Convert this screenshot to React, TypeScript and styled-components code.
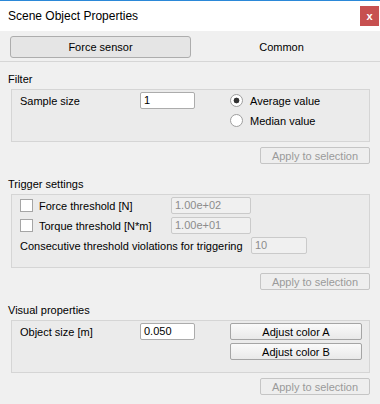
import React from 'react'
import styled, { createGlobalStyle } from 'styled-components'

const GlobalStyle = createGlobalStyle`
    html, body {
        margin: 0;
        padding: 0;
        background: #f0f0f0;
    }
    body {
        font-family: "Liberation Sans", Arial, sans-serif;
        font-size: 11px;
        color: #000;
    }
`

const Window = styled.div`
    width: 380px;
    height: 404px;
    background: #f0f0f0;
    border-top: 1px solid #2b88d8;
    box-sizing: border-box;
    display: flex;
    flex-direction: column;
`

const TitleBar = styled.div`
    height: 30px;
    background: #fff;
    display: flex;
    align-items: center;
    justify-content: space-between;
    padding-left: 8px;
`

const Caption = styled.span`
    font-size: 12px;
    color: #000;
`

const CloseButton = styled.div`
    width: 19px;
    height: 20px;
    margin-right: 1px;
    background: #c75050;
    color: #fff;
    font-weight: bold;
    font-size: 11px;
    display: flex;
    align-items: center;
    justify-content: center;
`

const TabBar = styled.div`
    display: grid;
    grid-template-columns: 181px 181px;
    gap: 0;
    padding: 5px 10px 3px 10px;
    border-bottom: 1px solid #d6d6d6;
`

const Tab = styled.div<{ active?: boolean }>`
    height: 22px;
    box-sizing: border-box;
    display: flex;
    align-items: center;
    justify-content: center;
    border: 1px solid ${({ active }) => (active ? '#adadad' : 'transparent')};
    border-radius: 3px;
    background: ${({ active }) => (active ? '#e5e5e5' : 'transparent')};
`

const Content = styled.div`
    padding: 11px 10px 0 8px;
    display: flex;
    flex-direction: column;
`

const Section = styled.div`
    display: flex;
    flex-direction: column;
    & + & {
        margin-top: 14px;
    }
`

const SectionTitle = styled.div`
    height: 13px;
    line-height: 13px;
    margin-bottom: 3px;
`

const GroupBox = styled.div<{ bottom: number }>`
    margin-left: 3px;
    border: 1px solid #d5d5d5;
    background: #ebebeb;
    padding: 2px 8px ${({ bottom }) => bottom}px 8px;
    display: grid;
    align-items: center;
`

const FilterGrid = styled(GroupBox)`
    grid-template-columns: 120px 55px 35px auto;
    grid-template-rows: 17px 17px;
    row-gap: 3px;
`

const TriggerGrid = styled(GroupBox)`
    grid-template-columns: 19px 132px 80px auto;
    grid-template-rows: 17px 17px 17px;
    row-gap: 3px;
`

const VisualGrid = styled(GroupBox)`
    grid-template-columns: 120px 55px 35px 132px;
    grid-template-rows: 17px 17px;
    row-gap: 3px;
`

const Label = styled.span<{ span?: number }>`
    grid-column: ${({ span }) => (span ? `span ${span}` : 'auto')};
    white-space: nowrap;
`

const Input = styled.div<{ disabled?: boolean; w?: number }>`
    width: ${({ w }) => (w ? `${w}px` : '100%')};
    height: 17px;
    box-sizing: border-box;
    border: 1px solid ${({ disabled }) => (disabled ? '#cacaca' : '#acacac')};
    border-radius: 2px;
    background: ${({ disabled }) => (disabled ? '#f0f0f0' : '#fff')};
    color: ${({ disabled }) => (disabled ? '#8c8c8c' : '#000')};
    padding-left: 3px;
    line-height: 15px;
`

const Gap = styled.span`
    grid-column: span 2;
`

const Radio = styled.label<{ checked?: boolean }>`
    display: flex;
    align-items: center;
    gap: 7px;
    &::before {
        content: '';
        width: 11px;
        height: 11px;
        border-radius: 50%;
        border: 1px solid #9e9e9e;
        background: ${({ checked }) =>
            checked ? 'radial-gradient(circle, #333 0 2.6px, #fff 3.2px)' : '#fff'};
    }
`

const Check = styled.span`
    width: 13px;
    height: 13px;
    box-sizing: border-box;
    border: 1px solid #a5a5a5;
    background: #fff;
`

const PushButton = styled.div<{ disabled?: boolean }>`
    height: 17px;
    box-sizing: border-box;
    display: flex;
    align-items: center;
    justify-content: center;
    border: 1px solid ${({ disabled }) => (disabled ? '#c5c5c5' : '#a5a5a5')};
    border-radius: 2px;
    background: ${({ disabled }) =>
        disabled ? '#eeeeee' : 'linear-gradient(#fafafa, #e9e9e9)'};
    color: ${({ disabled }) => (disabled ? '#9a9a9a' : '#000')};
`

const ApplyButton = styled(PushButton)`
    align-self: flex-end;
    width: 110px;
    margin-top: 5px;
`

const App = () => {
    return (
        <>
            <GlobalStyle />
            <Window>
                <TitleBar>
                    <Caption>Scene Object Properties</Caption>
                    <CloseButton>x</CloseButton>
                </TitleBar>
                <TabBar>
                    <Tab active>Force sensor</Tab>
                    <Tab>Common</Tab>
                </TabBar>
                <Content>
                    <Section>
                        <SectionTitle>Filter</SectionTitle>
                        <FilterGrid bottom={12}>
                            <Label>Sample size</Label>
                            <Input>1</Input>
                            <span />
                            <Radio checked>Average value</Radio>
                            <Gap />
                            <span />
                            <Radio>Median value</Radio>
                        </FilterGrid>
                        <ApplyButton disabled>Apply to selection</ApplyButton>
                    </Section>
                    <Section>
                        <SectionTitle>Trigger settings</SectionTitle>
                        <TriggerGrid bottom={13}>
                            <Check />
                            <Label>Force threshold [N]</Label>
                            <Input disabled>1.00e+02</Input>
                            <span />
                            <Check />
                            <Label>Torque threshold [N*m]</Label>
                            <Input disabled>1.00e+01</Input>
                            <span />
                            <Label span={3}>Consecutive threshold violations for triggering</Label>
                            <Input disabled w={56}>10</Input>
                        </TriggerGrid>
                        <ApplyButton disabled>Apply to selection</ApplyButton>
                    </Section>
                    <Section>
                        <SectionTitle>Visual properties</SectionTitle>
                        <VisualGrid bottom={12}>
                            <Label>Object size [m]</Label>
                            <Input>0.050</Input>
                            <span />
                            <PushButton>Adjust color A</PushButton>
                            <Gap />
                            <span />
                            <PushButton>Adjust color B</PushButton>
                        </VisualGrid>
                        <ApplyButton disabled>Apply to selection</ApplyButton>
                    </Section>
                </Content>
            </Window>
        </>
    )
}

export default App
